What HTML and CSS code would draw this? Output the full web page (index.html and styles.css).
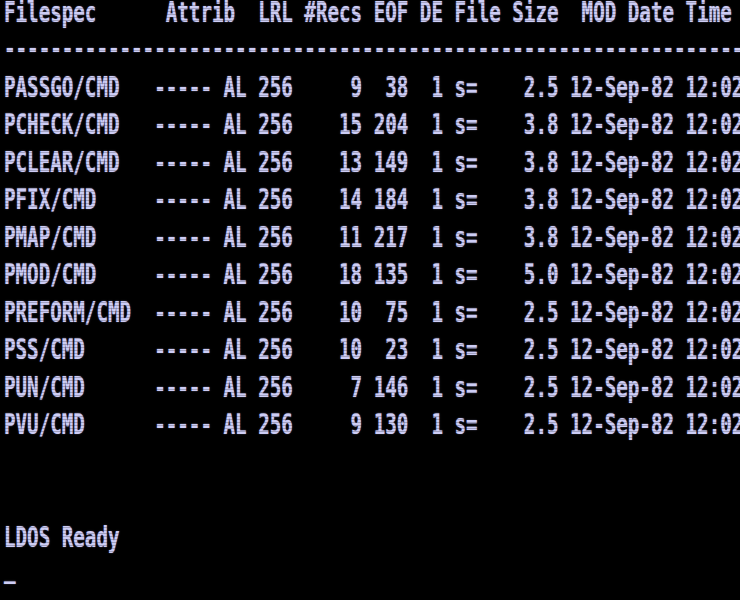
FILE: index.html
```html
<!DOCTYPE html>
<html lang="en">
<head>
<meta charset="utf-8">
<title>LDOS Directory</title>
<link rel="stylesheet" href="styles.css">
</head>
<body>
<main class="screen">
<pre class="term">Filespec      Attrib  LRL #Recs EOF DE File Size  MOD Date Time
<span class="rule">----------------------------------------------------------------</span>
PASSGO/CMD   ----- AL 256     9  38  1 s=    2.5 12-Sep-82 12:02
PCHECK/CMD   ----- AL 256    15 204  1 s=    3.8 12-Sep-82 12:02
PCLEAR/CMD   ----- AL 256    13 149  1 s=    3.8 12-Sep-82 12:02
PFIX/CMD     ----- AL 256    14 184  1 s=    3.8 12-Sep-82 12:02
PMAP/CMD     ----- AL 256    11 217  1 s=    3.8 12-Sep-82 12:02
PMOD/CMD     ----- AL 256    18 135  1 s=    5.0 12-Sep-82 12:02
PREFORM/CMD  ----- AL 256    10  75  1 s=    2.5 12-Sep-82 12:02
PSS/CMD      ----- AL 256    10  23  1 s=    2.5 12-Sep-82 12:02
PUN/CMD      ----- AL 256     7 146  1 s=    2.5 12-Sep-82 12:02
PVU/CMD      ----- AL 256     9 130  1 s=    2.5 12-Sep-82 12:02


LDOS Ready
<span class="cursor">_</span></pre>
</main>
</body>
</html>
```
FILE: styles.css
```css
html, body {
  margin: 0;
  padding: 0;
  background: #000;
  overflow: hidden;
  width: 740px;
  height: 600px;
}

.screen {
  position: relative;
  width: 740px;
  height: 600px;
  overflow: hidden;
  background: #000;
}

.term {
  margin: -7px 0 0 4px;
  font-family: "DejaVu Sans Mono", monospace;
  font-size: 19.2px;
  font-weight: bold;
  line-height: 25px;
  color: #cdcdf5;
  text-shadow: 0 0 1px rgba(190, 190, 255, 0.7);
  white-space: pre;
  transform: scaleY(1.5);
  transform-origin: 0 0;
}

.rule {
  display: inline-block;
  transform: translateY(-1px);
}

.cursor {
  display: inline-block;
  transform: translateY(-5px);
}

.screen::after {
  content: "";
  position: absolute;
  inset: 0;
  background: repeating-linear-gradient(to bottom, rgba(0,0,0,0) 0, rgba(0,0,0,0) 2px, rgba(0,0,0,0.22) 2px, rgba(0,0,0,0.22) 3px);
  pointer-events: none;
}
```
